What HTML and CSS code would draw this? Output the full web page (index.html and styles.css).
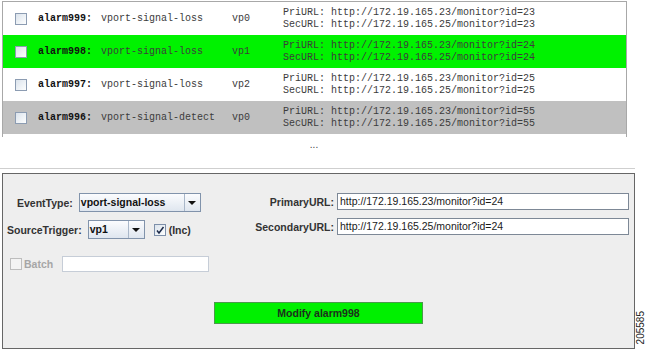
FILE: index.html
```html
<!DOCTYPE html>
<html>
<head>
	<meta charset="utf-8">
	<meta name="viewport" content="width=device-width, initial-scale=1">
	<title>Alarm editor</title>
<link rel="stylesheet" href="styles.css">
</head>
<body>
<div class="alarmlist">
    <div class="alarm">
        <span class="box"></span>
        <span class="alarmid">alarm999:</span>
        <span>vport-signal-loss</span>
        <span>vp0</span>
        <div class="urls">PriURL: http://172.19.165.23/monitor?id=23<br>SecURL: http://172.19.165.25/monitor?id=23</div>
    </div>
    <div class="alarm picked">
        <span class="box"></span>
        <span class="alarmid">alarm998:</span>
        <span>vport-signal-loss</span>
        <span>vp1</span>
        <div class="urls">PriURL: http://172.19.165.23/monitor?id=24<br>SecURL: http://172.19.165.25/monitor?id=24</div>
    </div>
    <div class="alarm">
        <span class="box"></span>
        <span class="alarmid">alarm997:</span>
        <span>vport-signal-loss</span>
        <span>vp2</span>
        <div class="urls">PriURL: http://172.19.165.23/monitor?id=25<br>SecURL: http://172.19.165.25/monitor?id=25</div>
    </div>
    <div class="alarm cleared">
        <span class="box"></span>
        <span class="alarmid">alarm996:</span>
        <span>vport-signal-detect</span>
        <span>vp0</span>
        <div class="urls">PriURL: http://172.19.165.23/monitor?id=55<br>SecURL: http://172.19.165.25/monitor?id=55</div>
    </div>
</div>
<div class="more">...</div>
<div class="sep"></div>
<div class="editor">
    <div class="fields">
        <div class="leftside">
            <div class="line line1">
                <span class="lbl">EventType:</span>
                <div class="combo combo_wide"><span class="val">vport-signal-loss</span><span class="arrow"></span></div>
            </div>
            <div class="line line2">
                <span class="lbl">SourceTrigger:</span>
                <div class="combo combo_small"><span class="val">vp1</span><span class="arrow"></span></div>
                <span class="tick">
                    <svg width="10" height="10" viewBox="0 0 10 10"><path d="M2 5.5 L4 8 L8.5 2" fill="none" stroke="#1c2a48" stroke-width="1.5"/></svg>
                </span>
                <span class="lbl">(Inc)</span>
            </div>
            <div class="line line3">
                <span class="offbox"></span>
                <span class="lbl offtext">Batch</span>
                <div class="batchfield"></div>
            </div>
        </div>
        <div class="rightside">
            <span class="lbl">PrimaryURL:</span>
            <div class="urlfield">http://172.19.165.23/monitor?id=24</div>
            <span class="lbl">SecondaryURL:</span>
            <div class="urlfield">http://172.19.165.25/monitor?id=24</div>
        </div>
    </div>
    <button class="modify">Modify alarm998</button>
</div>
<div class="fignum">205585</div>
</body>
</html>
```

FILE: styles.css
```css
body {
    margin: 0;
    background: #fff;
    font-family: "Liberation Sans", Arial, sans-serif;
    position: relative;
    height: 350px;
}
.alarmlist {
    width: 623px;
    margin: 1px 0 0 2px;
    border: 1px solid #a8a8a8;
    border-bottom: none;
    padding-bottom: 3px;
}
.alarm {
    display: grid;
    grid-template-columns: 23px 63px 131px 51px auto;
    align-items: center;
    height: 33px;
    padding-left: 12px;
    font-family: "Courier New", "Liberation Mono", monospace;
    font-size: 10px;
    line-height: 12px;
    color: #3c3c3c;
    white-space: nowrap;
}
.picked {
    background: #00f200;
}
.cleared {
    background: #c0c0c0;
}
.box {
    width: 10px;
    height: 10px;
    border: 1px solid #8c9cb2;
    background: linear-gradient(135deg, #dbe3ec, #fdfefe);
}
.alarmid {
    font-weight: bold;
    color: #111;
}
.more {
    width: 628px;
    height: 29px;
    padding-top: 2px;
    text-align: center;
    font-size: 10px;
    line-height: 12px;
    color: #444;
}
.sep {
    width: 635px;
    border-top: 1px solid #cfcfcf;
}
.editor {
    width: 631px;
    height: 155px;
    margin: 4px 0 0 2px;
    padding-top: 19px;
    border: 1px solid #666;
    background: #eeeeee;
}
.fields {
    display: flex;
    justify-content: space-between;
    align-items: flex-start;
    padding-right: 5px;
}
.leftside {
    display: flex;
    flex-direction: column;
}
.line {
    display: flex;
    align-items: center;
    height: 19px;
}
.line1 {
    padding-left: 14px;
    gap: 6px;
}
.line2 {
    margin-top: 8px;
    padding-left: 4px;
    gap: 6px;
}
.line3 {
    margin-top: 17px;
    height: 16px;
    padding-left: 7px;
}
.lbl {
    font-size: 10.5px;
    font-weight: bold;
    color: #333;
    white-space: nowrap;
}
.combo {
    display: flex;
    height: 17px;
    border: 1px solid #8193ab;
    background: linear-gradient(#fbfcfe, #dfe6ef);
}
.combo_wide {
    width: 120px;
}
.combo_small {
    width: 55px;
}
.val {
    flex: 1;
    padding-left: 1px;
    font-size: 10.5px;
    font-weight: bold;
    line-height: 17px;
    color: #111;
}
.arrow {
    width: 15px;
    border-left: 1px solid #a9b7c9;
    display: flex;
    align-items: center;
    justify-content: center;
}
.arrow::after {
    content: "";
    border-left: 4px solid transparent;
    border-right: 4px solid transparent;
    border-top: 4px solid #111;
}
.tick {
    width: 10px;
    height: 10px;
    margin-left: 3px;
    border: 1px solid #7d8fa9;
    background: linear-gradient(135deg, #dbe3ec, #fdfefe);
    display: flex;
    margin-right: -3px;
}
.offbox {
    width: 10px;
    height: 10px;
    border: 1px solid #bdbdbd;
    background: #f3f3f3;
    margin-right: 2px;
}
.offtext {
    color: #a6a6a6;
}
.batchfield {
    width: 145px;
    height: 14px;
    margin-left: 9px;
    border: 1px solid #c6cdd7;
    background: #fff;
}
.rightside {
    display: grid;
    grid-template-columns: auto 292px;
    column-gap: 3px;
    row-gap: 8px;
    align-items: center;
    text-align: right;
}
.urlfield {
    box-sizing: border-box;
    height: 17px;
    padding-left: 2px;
    border: 1px solid #7d8896;
    background: #fff;
    text-align: left;
    font-size: 10.5px;
    line-height: 15px;
    color: #1a1a1a;
}
.modify {
    display: block;
    width: 209px;
    height: 22px;
    margin: 30px auto 0;
    border: 1px solid #4a9a4a;
    background: #00f000;
    font-family: "Liberation Sans", Arial, sans-serif;
    font-size: 10.5px;
    font-weight: bold;
    color: #1c301c;
    padding: 0;
}
.fignum {
    position: absolute;
    right: 1px;
    top: 311px;
    writing-mode: vertical-rl;
    transform: rotate(180deg);
    font-size: 10px;
    line-height: 12px;
    color: #222;
}
```
